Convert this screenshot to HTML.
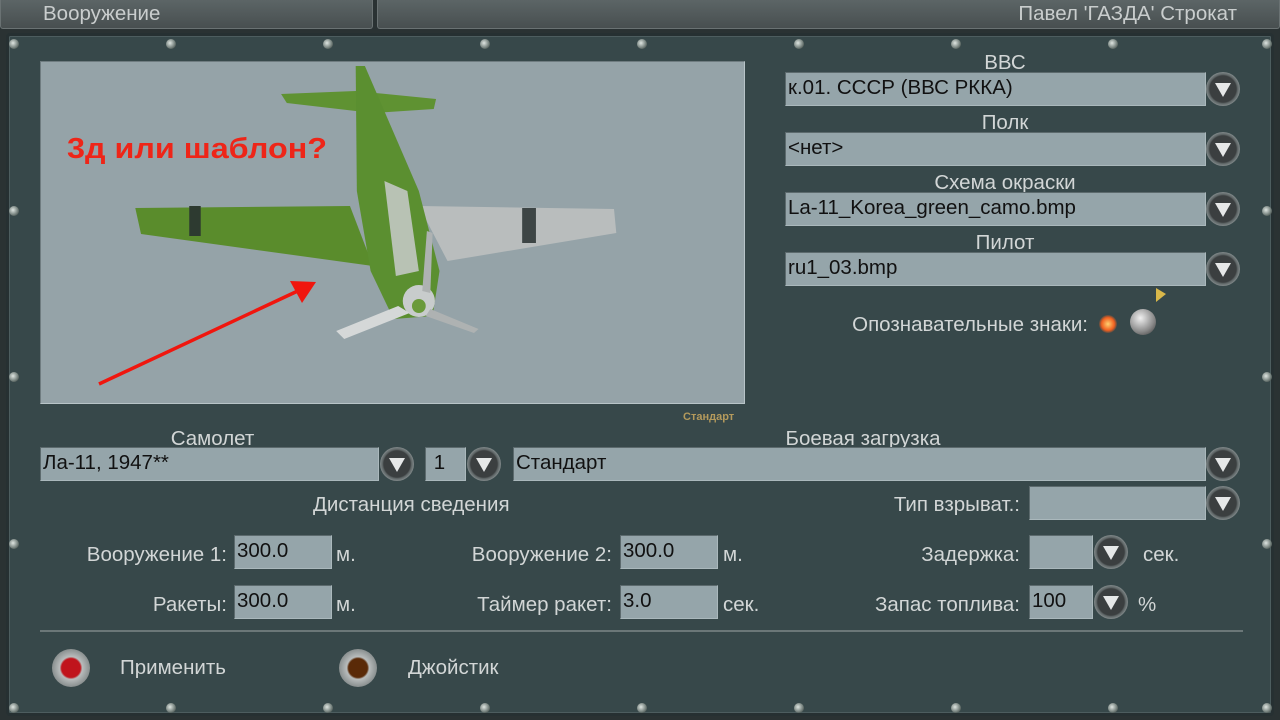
<!DOCTYPE html>
<html><head><meta charset="utf-8"><style>
*{margin:0;padding:0;box-sizing:border-box}
body{width:1280px;height:720px;overflow:hidden;background:#2a3233;font-family:"Liberation Sans",sans-serif;position:relative}
.a{position:absolute}
.tab{position:absolute;top:0;height:29px;background:linear-gradient(#5c6566,#484f50);border:1px solid #6a7273;border-top:none;color:#c9cdcd;font-size:20.5px;line-height:28px;border-radius:0 0 3px 3px}
.panel{position:absolute;left:6px;top:33px;width:1268px;height:683px;background:#37484a;border:3px solid #263032;border-radius:4px;box-shadow:inset 0 0 0 1px #4d5d5f}
.lbl{position:absolute;color:#d2d6d6;font-size:20.5px;line-height:22px;white-space:nowrap}
.r{text-align:right}
.f{position:absolute;background:#95a5aa;border:1px solid #aab8bc;border-top-color:#5c6a6d;border-left-color:#5c6a6d;color:#111;font-size:20.5px;line-height:30px;padding-left:2px;white-space:nowrap}
.b{position:absolute;width:34px;height:34px;border-radius:50%;background:radial-gradient(circle at 50% 50%,#3b3f40 55%,#5d6465 60%,#7f8788 70%,#4a5152 100%)}
.b:after{content:"";position:absolute;left:9px;top:11px;border-left:8px solid transparent;border-right:8px solid transparent;border-top:14px solid #e6e8e8}
.s{position:absolute;width:10px;height:10px;border-radius:50%;background:radial-gradient(circle at 40% 40%,#dfe6e2,#6e7a76 60%,#202826);}
</style></head><body>
<div class="tab" style="left:0;width:373px;padding-left:42px">Вооружение</div>
<div class="tab" style="left:377px;width:903px;text-align:right;padding-right:42px">Павел 'ГАЗДА' Строкат</div>
<div class="panel"></div>
<div class="s" style="left:9px;top:39px"></div><div class="s" style="left:166px;top:39px"></div><div class="s" style="left:323px;top:39px"></div><div class="s" style="left:480px;top:39px"></div><div class="s" style="left:637px;top:39px"></div><div class="s" style="left:794px;top:39px"></div><div class="s" style="left:951px;top:39px"></div><div class="s" style="left:1108px;top:39px"></div><div class="s" style="left:1262px;top:39px"></div>
<div class="s" style="left:9px;top:206px"></div><div class="s" style="left:1262px;top:206px"></div><div class="s" style="left:9px;top:372px"></div><div class="s" style="left:1262px;top:372px"></div><div class="s" style="left:9px;top:539px"></div><div class="s" style="left:1262px;top:539px"></div>
<div class="s" style="left:9px;top:703px"></div><div class="s" style="left:166px;top:703px"></div><div class="s" style="left:323px;top:703px"></div><div class="s" style="left:480px;top:703px"></div><div class="s" style="left:637px;top:703px"></div><div class="s" style="left:794px;top:703px"></div><div class="s" style="left:951px;top:703px"></div><div class="s" style="left:1108px;top:703px"></div><div class="s" style="left:1262px;top:703px"></div>

<div class="a" style="left:40px;top:61px;width:705px;height:343px;background:#95a3a8;border:1px solid #6f7c80;border-right-color:#b8c4c8;border-bottom-color:#b8c4c8">
<svg width="705" height="343" style="position:absolute;left:-1px;top:-1px">
<g transform="scale(1.148,1)">
<polygon points="210,33 275,30 345,38 343,48 290,52 215,42" fill="#5f9232"/>
<polygon points="83,147 270,145 290,205 88,173" fill="#5a8c2c"/>
<polygon points="330,145 500,148 502,172 355,200" fill="#b9bdbd"/>
<polygon points="275,5 283,5 330,130 348,210 342,255 308,258 288,210 276,130" fill="#5b8f30"/>
<polygon points="300,120 320,130 330,210 310,215" fill="#b8c2b4"/>
<rect x="130" y="145" width="10" height="30" fill="#2d3a30"/><rect x="420" y="147" width="12" height="35" fill="#3d4545"/>
<ellipse cx="330" cy="240" rx="14" ry="16" fill="#c8cccc"/><ellipse cx="330" cy="245" rx="6" ry="7" fill="#6a9a3a"/>
<polygon points="312,245 322,252 265,278 258,270" fill="#d5d8d8"/>
<polygon points="340,248 382,268 378,272 336,255" fill="#aeb2b2"/>
<polygon points="333,230 337,170 342,172 340,232" fill="#aeb2b2"/>
</g>
<line x1="59" y1="323" x2="262" y2="228" stroke="#f0160e" stroke-width="3.5"/>
<polygon points="276,221 250,220 262,242" fill="#f0160e"/>
<text x="27" y="97" font-family="Liberation Sans" font-weight="bold" font-size="29" textLength="260" lengthAdjust="spacingAndGlyphs" fill="#ee2518">3д или шаблон?</text>
</svg></div>
<div class="lbl" style="left:683px;top:406px;font-size:11px;color:#b49a5c;font-weight:bold">Стандарт</div>

<div class="lbl" style="left:785px;width:440px;text-align:center;top:52px">ВВС</div>
<div class="f" style="left:785px;top:72px;width:421px;height:34px">к.01. СССР (ВВС РККА)</div><div class="b" style="left:1206px;top:72px"></div>
<div class="lbl" style="left:785px;width:440px;text-align:center;top:112px">Полк</div>
<div class="f" style="left:785px;top:132px;width:421px;height:34px">&lt;нет&gt;</div><div class="b" style="left:1206px;top:132px"></div>
<div class="lbl" style="left:785px;width:440px;text-align:center;top:172px">Схема окраски</div>
<div class="f" style="left:785px;top:192px;width:421px;height:34px">La-11_Korea_green_camo.bmp</div><div class="b" style="left:1206px;top:192px"></div>
<div class="lbl" style="left:785px;width:440px;text-align:center;top:232px">Пилот</div>
<div class="f" style="left:785px;top:252px;width:421px;height:34px">ru1_03.bmp</div><div class="b" style="left:1206px;top:252px"></div>
<div class="a" style="left:1156px;top:288px;border-left:10px solid #d9b84a;border-top:6px solid transparent;border-bottom:8px solid transparent"></div>
<div class="lbl r" style="right:192px;top:314px">Опознавательные знаки:</div>
<div class="a" style="left:1099px;top:315px;width:18px;height:18px;border-radius:50%;background:radial-gradient(#ffd070,#f06020 50%,rgba(240,80,20,0) 75%)"></div>
<div class="a" style="left:1130px;top:309px;width:26px;height:26px;border-radius:50%;background:radial-gradient(circle at 40% 35%,#f0f0f0,#888 60%,#333)"></div>

<div class="lbl" style="left:40px;width:345px;text-align:center;top:428px">Самолет</div>
<div class="lbl" style="left:513px;width:700px;text-align:center;top:428px">Боевая загрузка</div>
<div class="f" style="left:40px;top:447px;width:339px;height:34px">Ла-11, 1947**</div><div class="b" style="left:380px;top:447px"></div>
<div class="f" style="left:425px;top:447px;width:41px;height:34px">&nbsp;1</div><div class="b" style="left:467px;top:447px"></div>
<div class="f" style="left:513px;top:447px;width:693px;height:34px">Стандарт</div><div class="b" style="left:1206px;top:447px"></div>

<div class="lbl" style="left:313px;top:494px">Дистанция сведения</div>
<div class="lbl r" style="right:260px;top:494px">Тип взрыват.:</div>
<div class="f" style="left:1029px;top:486px;width:177px;height:34px"></div><div class="b" style="left:1206px;top:486px"></div>

<div class="lbl r" style="right:1053px;top:544px">Вооружение 1:</div>
<div class="f" style="left:234px;top:535px;width:98px;height:34px">300.0</div><div class="lbl" style="left:336px;top:544px">м.</div>
<div class="lbl r" style="right:668px;top:544px">Вооружение 2:</div>
<div class="f" style="left:620px;top:535px;width:98px;height:34px">300.0</div><div class="lbl" style="left:723px;top:544px">м.</div>
<div class="lbl r" style="right:260px;top:544px">Задержка:</div>
<div class="f" style="left:1029px;top:535px;width:64px;height:34px"></div><div class="b" style="left:1094px;top:535px"></div><div class="lbl" style="left:1143px;top:544px">сек.</div>

<div class="lbl r" style="right:1053px;top:594px">Ракеты:</div>
<div class="f" style="left:234px;top:585px;width:98px;height:34px">300.0</div><div class="lbl" style="left:336px;top:594px">м.</div>
<div class="lbl r" style="right:668px;top:594px">Таймер ракет:</div>
<div class="f" style="left:620px;top:585px;width:98px;height:34px">3.0</div><div class="lbl" style="left:723px;top:594px">сек.</div>
<div class="lbl r" style="right:260px;top:594px">Запас топлива:</div>
<div class="f" style="left:1029px;top:585px;width:64px;height:34px">100</div><div class="b" style="left:1094px;top:585px"></div><div class="lbl" style="left:1138px;top:594px">%</div>

<div class="a" style="left:40px;top:630px;width:1203px;height:2px;background:#6b7778"></div>
<div class="a" style="left:52px;top:649px;width:38px;height:38px;border-radius:50%;background:radial-gradient(#c0141c 35%,#b8bcbc 42%,#8a9090 70%,#404848)"></div>
<div class="a" style="left:339px;top:649px;width:38px;height:38px;border-radius:50%;background:radial-gradient(#5a2a08 35%,#b8bcbc 42%,#8a9090 70%,#404848)"></div>
<div class="lbl" style="left:120px;top:657px">Применить</div>
<div class="lbl" style="left:408px;top:657px">Джойстик</div>
</body></html>
